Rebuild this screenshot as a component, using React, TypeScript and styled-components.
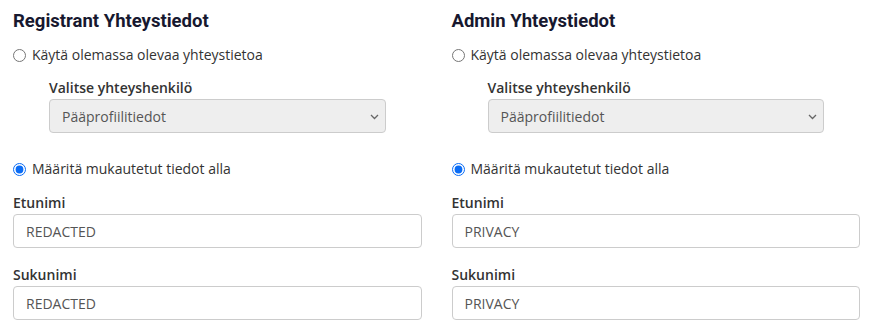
import styled, { createGlobalStyle } from "styled-components";

const GlobalStyle = createGlobalStyle`
  html, body {
    margin: 0;
    padding: 0;
    background: #fff;
  }
  body {
    font-family: "Open Sans", "Liberation Sans", sans-serif;
    font-size: 14px;
    color: #333;
  }
`;

const Page = styled.div`
  display: grid;
  grid-template-columns: 1fr 1fr;
  column-gap: 30px;
  padding: 9px 10px 0 13px;
  width: 870px;
  box-sizing: border-box;
`;

const Column = styled.section`
  display: flex;
  flex-direction: column;
`;

const Heading = styled.h3`
  margin: 0 0 12px;
  font-family: Roboto, "Liberation Sans", sans-serif;
  font-weight: 700;
  font-size: 18.5px;
  line-height: 24px;
  color: #17182f;
`;

const RadioRow = styled.label<{ $gap?: number }>`
  display: flex;
  align-items: center;
  gap: 6px;
  height: 20px;
  line-height: 20px;
  margin-bottom: ${(p) => p.$gap ?? 0}px;
  color: #333;
  cursor: pointer;

  input {
    margin: 0;
    width: 13px;
    height: 13px;
    accent-color: #0a6cf5;
  }
`;

const Field = styled.div<{ $indent?: number; $gap?: number }>`
  display: flex;
  flex-direction: column;
  padding: 0 ${(p) => p.$indent ?? 0}px;
  margin-bottom: ${(p) => p.$gap ?? 0}px;
`;

const Label = styled.label`
  font-weight: 600;
  line-height: 20px;
  margin-bottom: 1px;
  color: #333;
`;

const SelectBox = styled.div`
  position: relative;
  display: flex;
  align-items: center;
  height: 34px;
  box-sizing: border-box;
  padding: 0 12px;
  border: 1px solid #ccc;
  border-radius: 4px;
  background: #eee;
  color: #555;

  svg {
    position: absolute;
    right: 6px;
    top: 14px;
  }
`;

const TextInput = styled.input`
  height: 34px;
  box-sizing: border-box;
  padding: 0 12px;
  border: 1px solid #ccc;
  border-radius: 4px;
  background: #fff;
  font-family: inherit;
  font-size: 14px;
  color: #555;
  outline: none;
`;

function Chevron() {
  return (
    <svg width="9" height="6" viewBox="0 0 9 6">
      <path d="M1 1l3.5 3.5L8 1" fill="none" stroke="#666" strokeWidth="1.3" />
    </svg>
  );
}

function ContactColumn({ title, name, value }: { title: string; name: string; value: string }) {
  return (
    <Column>
      <Heading>{title}</Heading>
      <RadioRow $gap={13}>
        <input type="radio" name={name} />
        Käytä olemassa olevaa yhteystietoa
      </RadioRow>
      <Field $indent={36} $gap={26}>
        <Label>Valitse yhteyshenkilö</Label>
        <SelectBox>
          Pääprofiilitiedot
          <Chevron />
        </SelectBox>
      </Field>
      <RadioRow $gap={14}>
        <input type="radio" name={name} defaultChecked />
        Määritä mukautetut tiedot alla
      </RadioRow>
      <Field $gap={17}>
        <Label>Etunimi</Label>
        <TextInput defaultValue={value} />
      </Field>
      <Field>
        <Label>Sukunimi</Label>
        <TextInput defaultValue={value} />
      </Field>
    </Column>
  );
}

export default function App() {
  return (
    <>
      <GlobalStyle />
      <Page>
        <ContactColumn title="Registrant Yhteystiedot" name="registrant" value="REDACTED" />
        <ContactColumn title="Admin Yhteystiedot" name="admin" value="PRIVACY" />
      </Page>
    </>
  );
}
